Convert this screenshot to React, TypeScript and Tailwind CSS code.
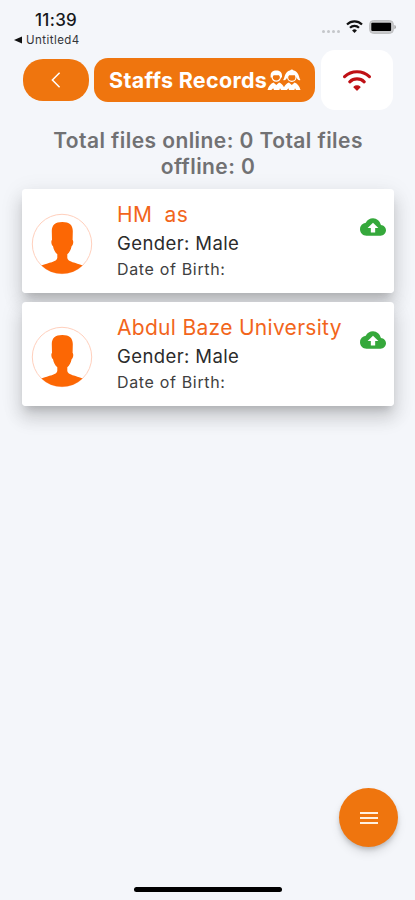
import React from "react";
import { MdCloudUpload } from "react-icons/md";

function StatusBar() {
  return (
    <div className="flex h-[50px] justify-between pl-[14px] pr-[19px]">
      <div className="pt-[10px]">
        <div className="pl-[21px] text-[17px] leading-[20px] font-medium tracking-[0.3px] text-[#17181b]">11:39</div>
        <div className="flex items-center gap-[4px] text-[11.5px] leading-[20px] tracking-[0.45px] text-[#333438]">
          <svg width="8" height="8" viewBox="0 0 8 8"><path d="M0 4 8 .6v6.8z" fill="#111" /></svg>
          Untitled4
        </div>
      </div>
      <div className="mt-[18px] flex h-[16px] items-center pt-[1px]">
        <div className="mr-[6px] mt-[9px] flex gap-[2px]">
          {[0, 1, 2, 3].map((i) => (
            <span key={i} className="h-[3px] w-[3px] rounded-full bg-[#c4c6ca]" />
          ))}
        </div>
        <svg className="mr-[6px]" width="17" height="13" viewBox="0 0 17 13" fill="none" stroke="#111" strokeWidth="2.2">
          <path d="M1 4.5a10.8 10.8 0 0 1 15 0M4 7.8a6.4 6.4 0 0 1 9 0" />
          <path d="M8.5 13 6.1 10.5a3.5 3.5 0 0 1 4.8 0z" fill="#111" stroke="none" />
        </svg>
        <svg width="27" height="14" viewBox="0 0 27 14">
          <rect x=".6" y=".6" width="23.8" height="12.8" rx="3.8" fill="#c8c9cb" stroke="#bcbdbf" />
          <rect x="2.3" y="2.8" width="19.8" height="8.3" rx="1" fill="#000" />
          <path d="M25.3 5a2.2 2.2 0 0 1 0 4.3z" fill="#aaa" />
        </svg>
      </div>
    </div>
  );
}

function PeopleIcon() {
  return (
    <svg width="34" height="22" viewBox="0 0 34 22" fill="none">
      <path d="M.5 21c1-4 3.300-6.300 6-7.500L9.300 16l2.800-2.500c2.300 1 4 2.500 4.900 4.700.9-2.200 2.600-3.700 4.900-4.700l2.900 2.500 2.800-2.500c2.700 1.200 5 3.500 5.900 7.500h-4.500l-1-1.800-.6 1.800h-5.400l-.6-1.800L20 21h-6l-1-1.800-.6 1.800H7l-.8-1.800L4.300 21z" fill="#fff" />
      <circle cx="9.300" cy="8" r="4.200" stroke="#fff" strokeWidth="1.200" />
      <path d="M3.600 6.500C3.600 3 5.800 1.400 9.300 1.400S15 3 15 6.500V8.500h-1.500L12 6.200H6.600L5 8.500H3.600z" fill="#fff" />
      <circle cx="24.800" cy="8.200" r="4.200" stroke="#fff" strokeWidth="1.200" />
      <path d="M20 8.800c-.8 1.500-2 2.900-3.800 2.200 1.500-2 1.100-4.800 3-7C20.400 2.600 21.500 1.800 23 1.500c1-1.300 2.700-1.300 3.600 0 1.500.3 2.700 1.100 3.800 2.500 1.900 2.200 1.500 5 3 7-1.800.7-3-.7-3.800-2.200L27.800 6.300h-6z" fill="#fff" />
    </svg>
  );
}

function Header() {
  return (
    <header className="flex h-[60px] items-center pl-[23px]">
      <button className="mr-[5px] flex h-[42px] w-[66px] items-center justify-center rounded-[20px] bg-[#ef750e]">
        <svg width="10" height="16" viewBox="0 0 10 16" fill="none" stroke="#fff" strokeWidth="1.5"><path d="M8.6.8 1.4 8l7.2 7.2" /></svg>
      </button>
      <div className="mr-[6px] flex h-[44px] w-[221px] items-center rounded-[14px] bg-[#ef750e] pl-[15px] text-[21.5px] font-bold text-white">
        <span className="w-[158px] whitespace-nowrap tracking-[0.31px]">Staffs Records</span>
        <PeopleIcon />
      </div>
      <div className="flex h-[60px] w-[72px] items-center justify-center rounded-[14px] bg-white">
        <svg className="mt-[1px]" width="28" height="21" viewBox="0 0 28 21" fill="none" stroke="#bf1015" strokeWidth="3.100" strokeLinecap="round">
          <path d="M1.600 6.700a18 18 0 0 1 24.800 0M6.800 11.800a10.400 10.400 0 0 1 14.400 0" />
          <path d="m14 20-3-2.900c1.500-1.600 4.500-1.600 6 0z" fill="#bf1015" strokeWidth="1.300" strokeLinejoin="round" />
        </svg>
      </div>
    </header>
  );
}

function Avatar() {
  return (
    <svg className="mt-[0.5px] shrink-0" width="62" height="62" viewBox="0 0 62 62">
      <circle cx="31" cy="31" r="29.700" fill="#fff" stroke="#ffd0bd" />
      <path d="M31.300 9C24 9 20.600 12.400 20.800 18.500L21 27c-1.200.9-.7 5.300 1 6.300.7 3.500 2 6 4.300 8v3.700c-.4 4-8.700 4.500-15.900 7.500a29.700 29.700 0 0 0 41.200 0c-6.800-3-14.900-3.500-15.300-7.500v-3.700c2.300-2 3.600-4.500 4.300-8 1.700-1 2.200-5.400 1-6.300l.2-8.500C42 12.400 38.600 9 31.300 9z" fill="#fc6704" />
    </svg>
  );
}

function StaffCard({ name }: { name: string }) {
  return (
    <article className="relative flex h-[104px] rounded-[4px] bg-white pl-[9px] pt-[23px] before:absolute before:inset-0 before:-z-10 before:rounded-[4px] before:shadow-[0_7px_8px_-4px_rgba(0,0,0,0.16),0_12px_17px_2px_rgba(0,0,0,0.12),0_5px_22px_4px_rgba(0,0,0,0.06)] before:content-['']">
      <Avatar />
      <div className="-mt-[13px] ml-[24px] grow whitespace-nowrap">
        <div className="pt-[1px] text-[21px] leading-[29px] tracking-[0.3px] whitespace-pre text-[#f2651b]">{name}</div>
        <div className="text-[18.500px] leading-[28px] tracking-[0.4px] text-[#2b2b2b]">Gender: Male</div>
        <div className="text-[16px] leading-[25px] tracking-[0.66px] text-[#404040]">Date of Birth:</div>
      </div>
      <MdCloudUpload className="mr-[8px] mt-[2px] h-[26px] w-[26px] shrink-0 text-[#35a83b]" />
    </article>
  );
}

export default function App() {
  return (
    <div className="relative isolate flex h-[900px] w-[415px] flex-col bg-[#f4f6fa] font-[Inter,'Liberation_Sans',sans-serif]">
      <StatusBar />
      <Header />
      <h1 className="mt-[18px] pl-[1px] text-center text-[21px] leading-[26px] font-semibold tracking-[0.43px] text-[#717173]">
        Total files online: 0 Total files<br />offline: 0
      </h1>
      <main className="ml-[22px] mt-[9px] flex w-[372px] flex-col gap-[9px]">
        <StaffCard name="HM  as" />
        <StaffCard name="Abdul Baze University" />
      </main>
      <footer className="mt-auto flex flex-col">
        <button className="mb-[40px] mr-[17px] flex h-[59px] w-[59px] flex-col items-center justify-center gap-[3px] self-end rounded-full bg-[#ef750e] shadow-[0_3px_5px_-1px_rgba(0,0,0,0.2),0_6px_10px_rgba(0,0,0,0.1)]">
          <span className="h-[2px] w-[18px] bg-[#fff0e0]" />
          <span className="h-[2px] w-[18px] bg-[#fff0e0]" />
          <span className="h-[2px] w-[18px] bg-[#fff0e0]" />
        </button>
        <div className="mb-[8px] h-[5px] w-[148px] self-center rounded-full bg-black" />
      </footer>
    </div>
  );
}
